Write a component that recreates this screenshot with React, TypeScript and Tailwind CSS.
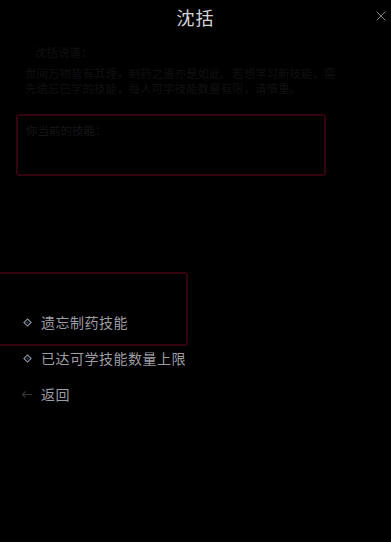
import { X } from 'lucide-react'

const FONT = { fontFamily: '"Noto Sans CJK SC", "Noto Sans", sans-serif' }

function Diamond() {
  return (
    <svg width="9" height="9" viewBox="0 0 10 10" className="shrink-0">
      <path d="M5 1 L9 5 L5 9 L1 5 Z" fill="none" stroke="#8d96a8" strokeWidth="1.2" />
      <path d="M5 3.5 L6.5 5 L5 6.5 L3.5 5 Z" fill="#3a4050" />
    </svg>
  )
}

function BackArrow() {
  return (
    <svg width="12" height="9" viewBox="0 0 12 9" className="shrink-0">
      <path d="M11 4.5 H2 M4.5 1.5 L1.5 4.5 L4.5 7.5" fill="none" stroke="#333" strokeWidth="1.2" />
    </svg>
  )
}

function Option({ icon, label }: { icon: React.ReactNode; label: string }) {
  return (
    <div className="flex h-[36px] items-center gap-[9px] pl-[22px]">
      <span className="flex w-[10px] justify-center">{icon}</span>
      <span className="text-[14px] tracking-[0.5px] text-[#9d9da4]">{label}</span>
    </div>
  )
}

export default function App() {
  return (
    <div className="relative h-[542px] w-[391px] overflow-hidden bg-black" style={FONT}>
      {/* header */}
      <header className="relative flex h-[34px] items-center justify-center">
        <h1 className="text-[18px] tracking-[1px] text-[#d4d4d8]">沈括</h1>
        <button className="absolute right-[2px] top-[8px] text-[#b5b5b5]">
          <X size={16} strokeWidth={1.1} />
        </button>
      </header>

      {/* npc dialog */}
      <section className="whitespace-nowrap px-[25px] pt-[11px] text-[11.5px] leading-[15px] text-[#101012]">
        <p className="pl-[10px]">沈括说道：</p>
        <p className="mt-[6px]">世间万物皆有其理，制药之道亦是如此。若想学习新技能，需</p>
        <p>先遗忘已学的技能，每人可学技能数量有限，请慎重。</p>
      </section>

      {/* current skills box */}
      <div className="ml-[16px] mt-[18px] h-[62px] w-[310px] rounded-[3px] border-2 border-[#33040f] px-[8px] pt-[6px]">
        <p className="text-[11.5px] text-[#161618]">你当前的技能：</p>
      </div>

      {/* options */}
      <nav className="mt-[128px]">
        <Option icon={<Diamond />} label="遗忘制药技能" />
        <Option icon={<Diamond />} label="已达可学技能数量上限" />
        <Option icon={<BackArrow />} label="返回" />
      </nav>

      {/* highlight overlay */}
      <div className="pointer-events-none absolute left-[-6px] top-[272px] h-[74px] w-[194px] rounded-[3px] border-2 border-[#33040f]" />
    </div>
  )
}
